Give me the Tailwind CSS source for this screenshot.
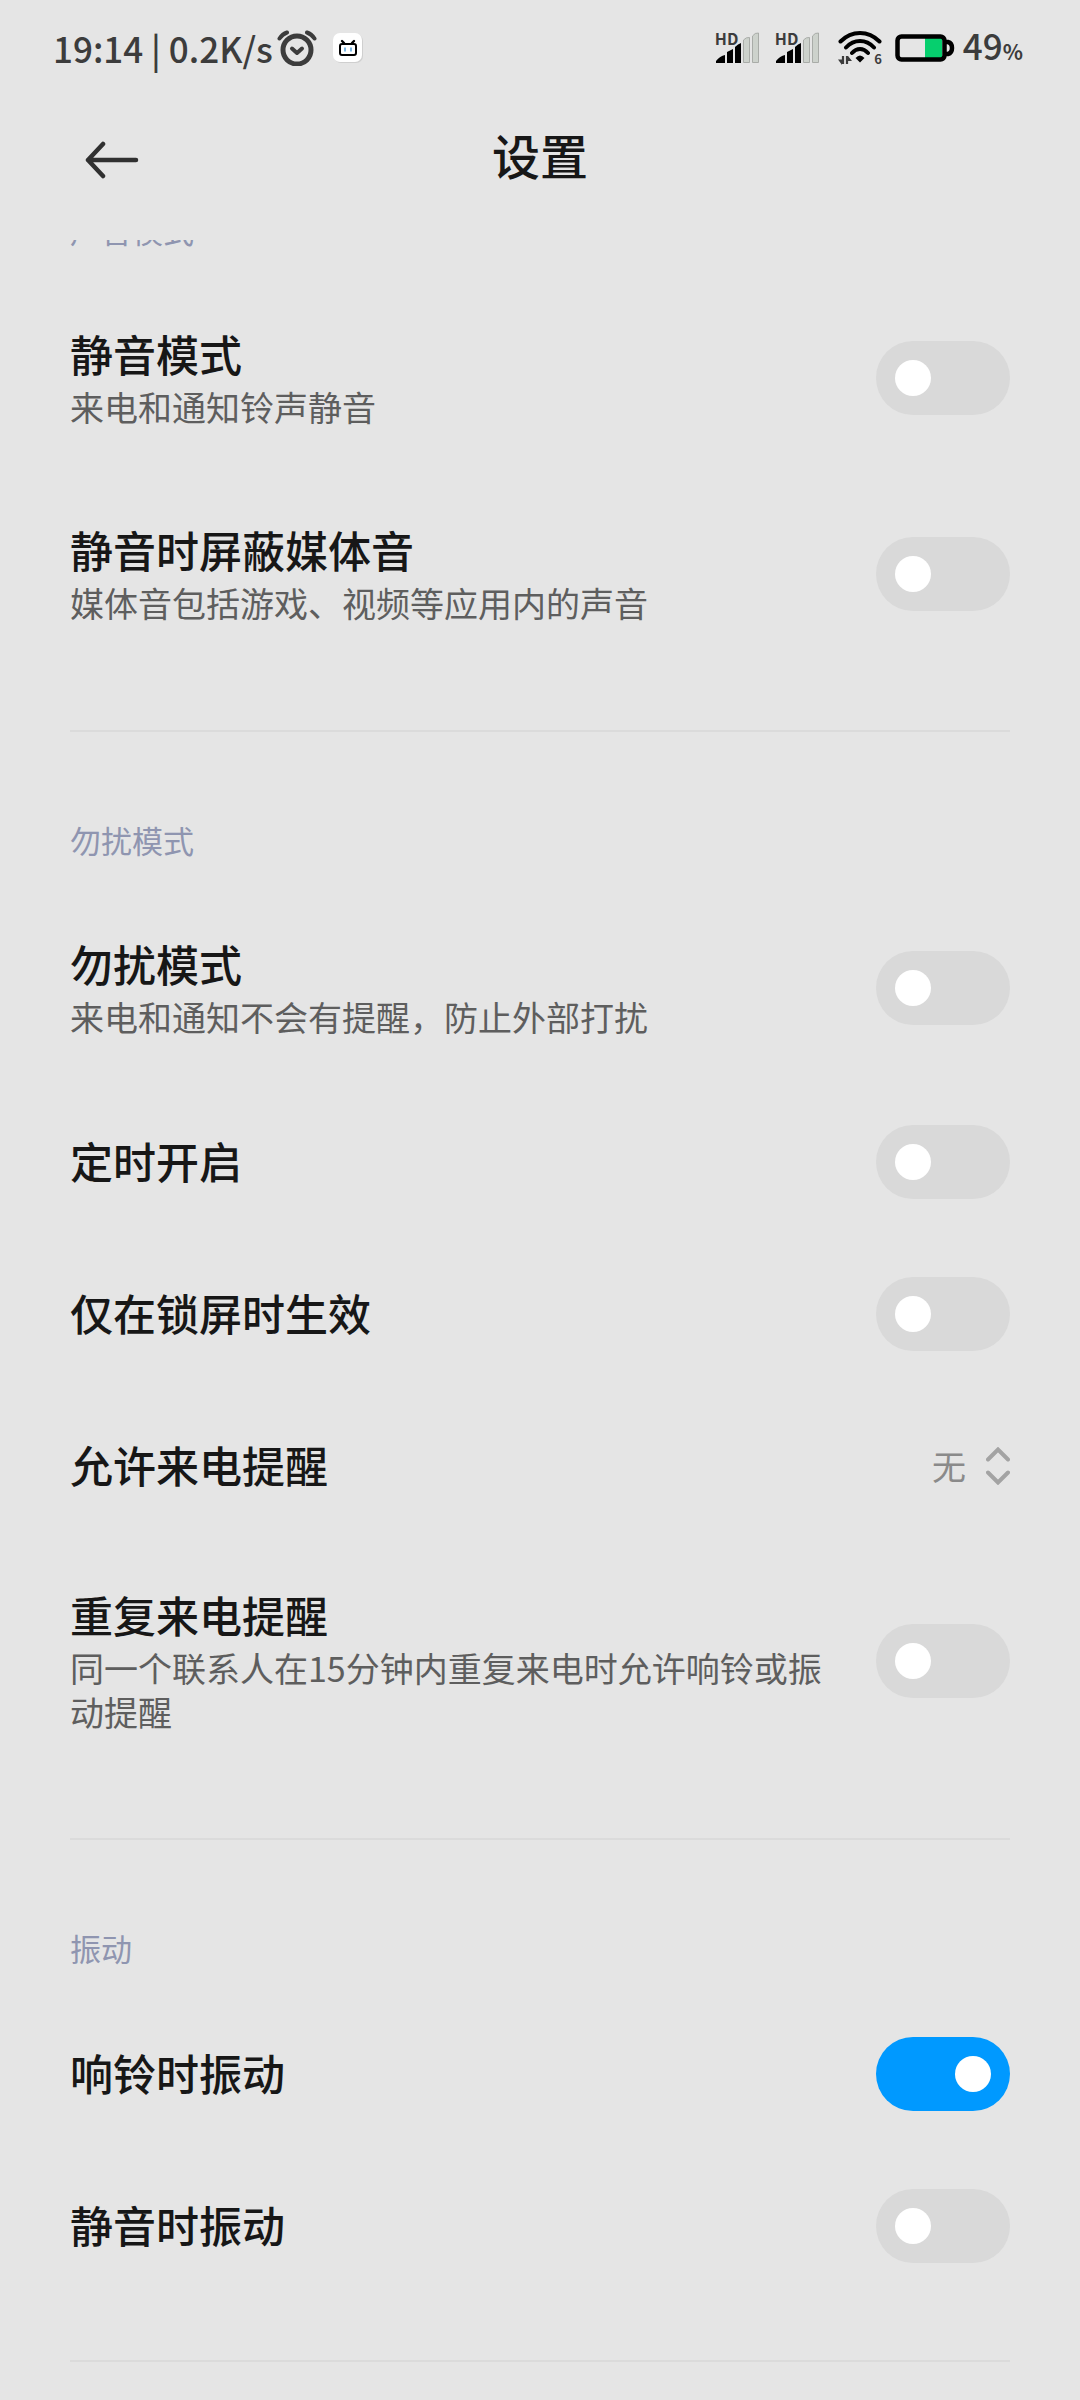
<!DOCTYPE html>
<html lang="zh-CN">
<head>
    <meta charset="UTF-8">
    <meta name="viewport" content="width=device-width, initial-scale=1.0">
    <title>设置</title>
    <script src="https://cdn.jsdelivr.net/npm/@tailwindcss/browser@4"></script>
</head>
<body class="bg-[#e5e5e5] text-[#171717] font-['Noto_Sans_CJK_SC',sans-serif]">

    <!-- Status bar -->
    <div class="flex items-center justify-between h-24 pl-[53px] pr-[57px] text-[#3c3c3c] text-[35px] leading-[48px] font-medium">
        <div class="flex items-center">
            <span>19:14 | 0.2K/s</span>
            <svg class="ml-1 w-10 h-9" viewBox="0 0 40 36" fill="none" stroke="#3c3c3c" stroke-linecap="round" stroke-linejoin="round">
                <circle cx="20" cy="20" r="14" stroke-width="5"/>
                <path d="M15 18.500l5 4.500 5-4.500" stroke-width="4"/>
                <path d="M2.500 8.500Q5.500 4 10 2.500M37.500 8.500Q34.500 4 30 2.500" stroke-width="4"/>
            </svg>
            <svg class="ml-4 w-[30px] h-[30px]" viewBox="0 0 30 30" fill="none">
                <rect x="1" y="1" width="29" height="29" rx="7" fill="#cfcfcf"/>
                <rect width="29" height="29" rx="7" fill="#fff"/>
                <rect x="7" y="11" width="16" height="11" rx="2" stroke="#000" stroke-width="2"/>
                <path d="M9 8l2 2M21 8l-2 2" stroke="#000" stroke-width="2.400" stroke-linecap="round"/>
                <path d="M12 14.500v4M18 14.500v4" stroke="#5aa5dc" stroke-width="1.600"/>
            </svg>
        </div>
        <div class="flex items-center">
            <div class="relative">
                <svg class="w-[45px] h-8" viewBox="0 0 45 32">
                    <path d="M28.500 30.500V8Q31 5 34.500 5.500v25zM37.500 30.500V4Q40 .500 43.500 1v29.500z" fill="#cdd2cc" stroke="#a9aca8"/>
                    <path d="M1 31v-2q4-5 9-6v8zM12 31V20l6-3v14zM20 31V15q3-3 6-4v20z"/>
                </svg>
                <span class="absolute left-0 -top-1 text-[16px] leading-5 font-bold">HD</span>
            </div>
            <div class="relative ml-[15px]">
                <svg class="w-[45px] h-8" viewBox="0 0 45 32">
                    <path d="M28.500 30.500V8Q31 5 34.500 5.500v25zM37.500 30.500V4Q40 .500 43.500 1v29.500z" fill="#cdd2cc" stroke="#a9aca8"/>
                    <path d="M1 31v-2q4-5 9-6v8zM12 31V20l6-3v14zM20 31V15q3-3 6-4v20z"/>
                </svg>
                <span class="absolute left-0 -top-1 text-[16px] leading-5 font-bold">HD</span>
            </div>
            <div class="relative ml-[18px]">
                <svg class="w-11 h-[34px]" viewBox="0 0 44 34" fill="none" stroke="#000" stroke-width="4" stroke-linecap="round">
                    <path d="M2.500 10.500Q11 2 22 2t19.500 8.500M8 16.500Q14 10 22 10t14 6.500M14 22q3.500-4 8-4t8 4"/>
                    <path d="M17.500 27q4.500-5 9 0L22 31.500z" fill="#000" stroke="none"/>
                    <path d="M5 25v8M9 33v-8" stroke="#3c3c3c" stroke-width="2.200" stroke-linecap="butt"/>
                    <path d="M0 28.500h4V34zM10 25v5h4z" fill="#3c3c3c" stroke="none"/>
                </svg>
                <span class="absolute right-0 -bottom-1 text-[13px] leading-5 font-bold">6</span>
            </div>
            <svg class="ml-[13px] w-[60px] h-7" viewBox="0 0 60 28" fill="none" stroke="#000" stroke-width="4.500">
                <path d="M30 4h17v20H30z" fill="#06cf6e" stroke="none"/>
                <rect x="2.500" y="2.500" width="47" height="23" rx="4"/>
                <path d="M50 8h3q4 1 4 6t-4 6h-3"/>
            </svg>
            <span class="ml-2">49<span class="text-[21px] font-bold">%</span></span>
        </div>
    </div>

    <!-- Title bar -->
    <header class="grid grid-cols-3 items-center h-36 px-[85px] pb-4">
        <button type="button" aria-label="返回" class="justify-self-start cursor-pointer">
            <svg class="w-14 h-10" viewBox="0 0 56 40" fill="none" stroke="#303030" stroke-width="4.500" stroke-linecap="round" stroke-linejoin="round">
                <path d="M18 4L3 20l15 16M3 20h48"/>
            </svg>
        </button>
        <h1 class="pb-3 text-center text-[48px] leading-[64px] font-medium">设置</h1>
    </header>

    <!-- Settings list, scrolled a little under the title bar -->
    <main class="overflow-hidden px-[70px]">
        <section class="pb-[58px] border-b-2 border-[#dbdbdb]">
            <h2 class="-mt-[33px] pb-[27px] text-[31px] leading-[46px] text-[#8f95b0]">声音模式</h2>
            <label class="flex items-center justify-between gap-10 min-h-[152px] py-[47px]">
                <span>
                    <span class="block pb-[6px] text-[43px] leading-[52px] font-medium">静音模式</span>
                    <span class="block text-[34px] leading-[44px] text-[#5e5e5e]">来电和通知铃声静音</span>
                </span>
                <input type="checkbox" class="appearance-none shrink-0 flex items-center w-[134px] h-[74px] px-[19px] rounded-full bg-[#d9d9d9] checked:bg-[#0099ff] checked:justify-end before:block before:size-9 before:rounded-full before:bg-white">
            </label>
            <label class="flex items-center justify-between gap-10 min-h-[152px] py-[47px]">
                <span>
                    <span class="block pb-[6px] text-[43px] leading-[52px] font-medium">静音时屏蔽媒体音</span>
                    <span class="block text-[34px] leading-[44px] text-[#5e5e5e]">媒体音包括游戏、视频等应用内的声音</span>
                </span>
                <input type="checkbox" class="appearance-none shrink-0 flex items-center w-[134px] h-[74px] px-[19px] rounded-full bg-[#d9d9d9] checked:bg-[#0099ff] checked:justify-end before:block before:size-9 before:rounded-full before:bg-white">
            </label>
        </section>

        <section class="pb-[58px] border-b-2 border-[#dbdbdb]">
            <h2 class="pt-[85px] pb-[27px] text-[31px] leading-[46px] text-[#8f95b0]">勿扰模式</h2>
            <label class="flex items-center justify-between gap-10 min-h-[152px] py-[47px]">
                <span>
                    <span class="block pb-[6px] text-[43px] leading-[52px] font-medium">勿扰模式</span>
                    <span class="block text-[34px] leading-[44px] text-[#5e5e5e]">来电和通知不会有提醒，防止外部打扰</span>
                </span>
                <input type="checkbox" class="appearance-none shrink-0 flex items-center w-[134px] h-[74px] px-[19px] rounded-full bg-[#d9d9d9] checked:bg-[#0099ff] checked:justify-end before:block before:size-9 before:rounded-full before:bg-white">
            </label>
            <label class="flex items-center justify-between gap-10 min-h-[152px]">
                <span class="pb-[4px] text-[43px] leading-[52px] font-medium">定时开启</span>
                <input type="checkbox" class="appearance-none shrink-0 flex items-center w-[134px] h-[74px] px-[19px] rounded-full bg-[#d9d9d9] checked:bg-[#0099ff] checked:justify-end before:block before:size-9 before:rounded-full before:bg-white">
            </label>
            <label class="flex items-center justify-between gap-10 min-h-[152px]">
                <span class="pb-[4px] text-[43px] leading-[52px] font-medium">仅在锁屏时生效</span>
                <input type="checkbox" class="appearance-none shrink-0 flex items-center w-[134px] h-[74px] px-[19px] rounded-full bg-[#d9d9d9] checked:bg-[#0099ff] checked:justify-end before:block before:size-9 before:rounded-full before:bg-white">
            </label>
            <div class="flex items-center justify-between gap-10 min-h-[152px]">
                <label for="allowCalls" class="pb-[4px] text-[43px] leading-[52px] font-medium">允许来电提醒</label>
                <div class="flex items-center gap-5">
                    <select id="allowCalls" class="appearance-none bg-transparent text-[34px] leading-[44px] text-[#8a8a8a]">
                        <option>无</option>
                    </select>
                    <svg class="w-6 h-[38px] pointer-events-none" viewBox="0 0 24 38" fill="none" stroke="#a3a3a3" stroke-width="4" stroke-linecap="round">
                        <path d="M2 12.500L12 2.500l10 10M2 25.500l10 10 10-10"/>
                    </svg>
                </div>
            </div>
            <label class="flex items-center justify-between gap-10 min-h-[152px] pt-[46px] pb-[46px]">
                <span>
                    <span class="block pb-[6px] text-[43px] leading-[52px] font-medium">重复来电提醒</span>
                    <span class="block text-[34px] leading-[44px] text-[#5e5e5e]">同一个联系人在15分钟内重复来电时允许响铃或振动提醒</span>
                </span>
                <input type="checkbox" class="appearance-none shrink-0 flex items-center w-[134px] h-[74px] px-[19px] rounded-full bg-[#d9d9d9] checked:bg-[#0099ff] checked:justify-end before:block before:size-9 before:rounded-full before:bg-white">
            </label>
        </section>

        <section class="pb-[58px] border-b-2 border-[#dbdbdb]">
            <h2 class="pt-[85px] pb-[27px] text-[31px] leading-[46px] text-[#8f95b0]">振动</h2>
            <label class="flex items-center justify-between gap-10 min-h-[152px]">
                <span class="pb-[4px] text-[43px] leading-[52px] font-medium">响铃时振动</span>
                <input type="checkbox" checked class="appearance-none shrink-0 flex items-center w-[134px] h-[74px] px-[19px] rounded-full bg-[#d9d9d9] checked:bg-[#0099ff] checked:justify-end before:block before:size-9 before:rounded-full before:bg-white">
            </label>
            <label class="flex items-center justify-between gap-10 min-h-[152px]">
                <span class="pb-[4px] text-[43px] leading-[52px] font-medium">静音时振动</span>
                <input type="checkbox" class="appearance-none shrink-0 flex items-center w-[134px] h-[74px] px-[19px] rounded-full bg-[#d9d9d9] checked:bg-[#0099ff] checked:justify-end before:block before:size-9 before:rounded-full before:bg-white">
            </label>
        </section>
    </main>
</body>
</html>
